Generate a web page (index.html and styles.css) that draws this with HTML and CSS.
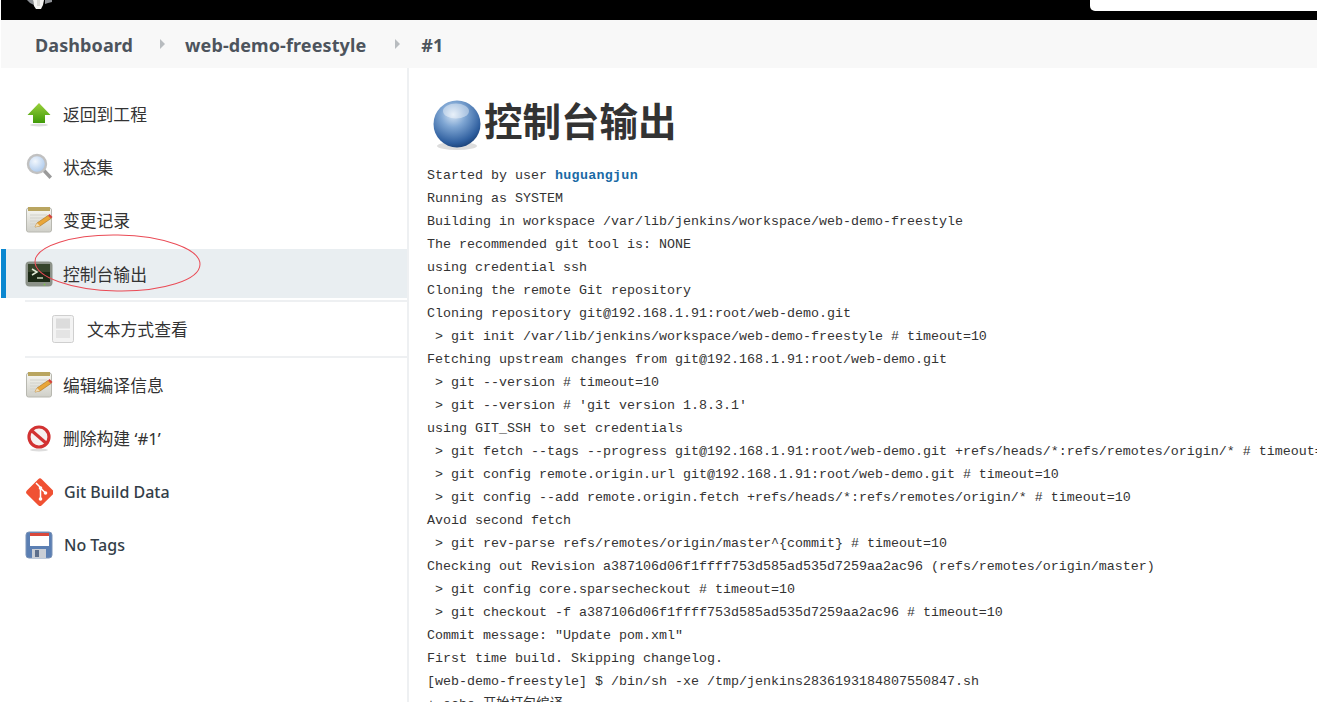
FILE: index.html
```html
<!DOCTYPE html>
<html lang="zh">
<head>
<meta charset="utf-8">
<title>控制台输出</title>
<link rel="stylesheet" href="styles.css">
</head>
<body>
<svg class="defs" width="0" height="0" aria-hidden="true">
  <defs>
    <linearGradient id="notePaper" x1="0" y1="0" x2="0" y2="1"><stop offset="0" stop-color="#f7f7f2"/><stop offset="1" stop-color="#cfcfc8"/></linearGradient>
    <radialGradient id="globe" cx="0.42" cy="0.3" r="0.75"><stop offset="0" stop-color="#d9e7f6"/><stop offset="0.35" stop-color="#7fa6d3"/><stop offset="0.8" stop-color="#2f5f9f"/><stop offset="1" stop-color="#173c70"/></radialGradient>
    <radialGradient id="lens" cx="0.4" cy="0.35" r="0.7"><stop offset="0" stop-color="#f2f7fd"/><stop offset="1" stop-color="#a6c5ea"/></radialGradient>
    <linearGradient id="arrow" x1="0" y1="0" x2="0" y2="1"><stop offset="0" stop-color="#9ad13c"/><stop offset="1" stop-color="#3f9a08"/></linearGradient>
    <symbol id="note" viewBox="0 0 28 28">
      <rect x="1.5" y="2" width="25" height="24" rx="2" fill="url(#notePaper)" stroke="#b8b8b0"/>
      <rect x="3" y="1" width="22" height="4" fill="#b9a560"/>
      <path d="M5 9h17M5 12h14M5 15h9M5 18h7M5 21h6" stroke="#d2d2cc" stroke-width="1.2"/>
      <path d="M10 21l2-4L23 9.500l3 3L15 20z" fill="#e9a63a" stroke="#a8701c" stroke-width=".6"/>
      <path d="M23 9.500l3 3 1.500-1.500-3-3z" fill="#d5413a"/>
      <path d="M10 21l2-4 3 3z" fill="#f3dcb2"/>
    </symbol>
  </defs>
</svg>

<header class="topbar">
  <svg class="logo" width="32" height="10" viewBox="0 0 32 10" aria-hidden="true">
    <path d="M2 0h6l1 5-4-2z" fill="#8b8f94"/>
    <path d="M8 0h11l-1 5-2 4H11L9 6z" fill="#f3f3f1"/>
    <path d="M12 0h3v6h-3z" fill="#d8d8d4"/>
    <path d="M20 0h7v2l-4 1-3 1z" fill="#8f9297"/>
  </svg>
  <div class="search"></div>
</header>

<nav class="crumbs">
  <a class="crumb">Dashboard</a><span class="sep"></span>
  <a class="crumb">web-demo-freestyle</a><span class="sep sep-last"></span>
  <a class="crumb">#1</a>
</nav>

<div class="main">
  <aside class="side">
    <a class="task">
      <svg class="ico" viewBox="0 0 28 28"><path d="M14 3L25.500 15H20v8H8v-8H2.500z" fill="url(#arrow)"/><ellipse cx="14" cy="25" rx="9" ry="1.500" fill="#ddd"/></svg>
      <span>返回到工程</span>
    </a>
    <a class="task">
      <svg class="ico" viewBox="0 0 28 28"><path d="M17 18l3-2 7 7.500-2.500 2.500z" fill="#9a9a9a"/><circle cx="12" cy="11" r="9" fill="url(#lens)" stroke="#c1c1c1" stroke-width="2.400"/></svg>
      <span>状态集</span>
    </a>
    <a class="task">
      <svg class="ico" viewBox="0 0 28 28"><use href="#note"/></svg>
      <span>变更记录</span>
    </a>
    <a class="task active">
      <svg class="ico" viewBox="0 0 28 28"><rect x="0.500" y="1.500" width="27" height="25" rx="4" fill="#8c9289"/><rect x="3" y="4" width="22" height="18" fill="#1c2a16"/><rect x="3" y="4" width="22" height="8" fill="#36452c"/><path d="M7 9l5 3-5 3" fill="none" stroke="#dfe8d3" stroke-width="1.500"/><path d="M12 18h6" stroke="#c8d4bb" stroke-width="1.500"/><circle cx="19.500" cy="24.500" r="1" fill="#7fc24c"/></svg>
      <span>控制台输出</span>
    </a>
    <div class="sub">
      <a class="task subtask">
        <svg class="ico" viewBox="0 0 28 28"><rect x="3.500" y="0.500" width="21" height="27" rx="2" fill="#f3f3f3" stroke="#cfcfcf"/><rect x="7" y="3.500" width="14" height="10" fill="#dcdcdc"/><rect x="7" y="15" width="14" height="8" fill="#e4e4e4"/></svg>
        <span>文本方式查看</span>
      </a>
    </div>
    <a class="task">
      <svg class="ico" viewBox="0 0 28 28"><use href="#note"/></svg>
      <span>编辑编译信息</span>
    </a>
    <a class="task">
      <svg class="ico" viewBox="0 0 28 28"><ellipse cx="14" cy="26" rx="9" ry="1.500" fill="#ddd"/><circle cx="14" cy="13" r="10" fill="#f6f1f1" stroke="#d23232" stroke-width="3.200"/><path d="M6.500 6.500l15 13" stroke="#d23232" stroke-width="3.200"/></svg>
      <span>删除构建 ‘#1’</span>
    </a>
    <a class="task">
      <svg class="ico" viewBox="0 0 28 28"><rect x="4.500" y="4.500" width="21" height="21" rx="2.500" transform="rotate(45 15 15) translate(-.500 -.500)" fill="#f05133"/><path d="M11 5l4.500 4.500V21M15.500 10l5 5" fill="none" stroke="#fff" stroke-width="1.500"/><circle cx="15.500" cy="10" r="1.800" fill="#fff"/><circle cx="15.500" cy="21" r="1.800" fill="#fff"/><circle cx="20.500" cy="15" r="1.800" fill="#fff"/></svg>
      <span class="latin">Git Build Data</span>
    </a>
    <a class="task">
      <svg class="ico" viewBox="0 0 28 28"><rect x="1" y="1" width="26" height="26" rx="3" fill="#5b7fb3" stroke="#7b93b7"/><rect x="5" y="2" width="19" height="13" fill="#fff"/><rect x="5" y="2" width="19" height="3" fill="#d9483b"/><rect x="7" y="18" width="14" height="9" fill="#c9ced6"/><rect x="10" y="19" width="4" height="7" fill="#5d6f8c"/></svg>
      <span class="latin">No Tags</span>
    </a>
  </aside>

  <main class="content">
    <h1 class="title">
      <svg class="globe" viewBox="0 0 50 50" aria-hidden="true"><ellipse cx="25" cy="46" rx="20" ry="4" fill="#ddd"/><circle cx="25" cy="24" r="23.500" fill="url(#globe)"/><ellipse cx="24" cy="11" rx="13" ry="7.500" fill="#fff" opacity=".4"/></svg>
      <span>控制台输出</span>
    </h1>
<pre class="console">Started by user <a class="user">huguangjun</a>
Running as SYSTEM
Building in workspace /var/lib/jenkins/workspace/web-demo-freestyle
The recommended git tool is: NONE
using credential ssh
Cloning the remote Git repository
Cloning repository git@192.168.1.91:root/web-demo.git
 &gt; git init /var/lib/jenkins/workspace/web-demo-freestyle # timeout=10
Fetching upstream changes from git@192.168.1.91:root/web-demo.git
 &gt; git --version # timeout=10
 &gt; git --version # 'git version 1.8.3.1'
using GIT_SSH to set credentials
 &gt; git fetch --tags --progress git@192.168.1.91:root/web-demo.git +refs/heads/*:refs/remotes/origin/* # timeout=10
 &gt; git config remote.origin.url git@192.168.1.91:root/web-demo.git # timeout=10
 &gt; git config --add remote.origin.fetch +refs/heads/*:refs/remotes/origin/* # timeout=10
Avoid second fetch
 &gt; git rev-parse refs/remotes/origin/master^{commit} # timeout=10
Checking out Revision a387106d06f1ffff753d585ad535d7259aa2ac96 (refs/remotes/origin/master)
 &gt; git config core.sparsecheckout # timeout=10
 &gt; git checkout -f a387106d06f1ffff753d585ad535d7259aa2ac96 # timeout=10
Commit message: "Update pom.xml"
First time build. Skipping changelog.
[web-demo-freestyle] $ /bin/sh -xe /tmp/jenkins2836193184807550847.sh
+ echo 开始打包编译</pre>
  </main>
</div>

<svg class="annotation" width="170" height="62" viewBox="0 0 170 62" aria-hidden="true"><ellipse cx="83.500" cy="30" rx="82.500" ry="28" fill="none" stroke="#ea4a55" stroke-width="1" transform="rotate(1 84 30)"/></svg>
</body>
</html>
```
FILE: styles.css
```css
* { box-sizing: border-box; }
html, body { height: 100%; }
body {
  margin: 0;
  padding-left: 1px;
  height: 702px;
  overflow: hidden;
  position: relative;
  background: #fff;
  color: #333;
  font-family: "Noto Sans", "Noto Sans CJK SC", sans-serif;
}
.defs { position: absolute; }
.topbar {
  height: 20px;
  background: #000;
  display: flex;
  justify-content: space-between;
  align-items: flex-start;
  padding-left: 24px;
}
.logo { display: block; }
.search {
  width: 227px;
  height: 11px;
  background: #fff;
  border-bottom-left-radius: 5px;
}
.crumbs {
  height: 48px;
  background: #f8f8f8;
  display: flex;
  align-items: center;
  padding: 2px 0 0 34px;
  color: #4d545d;
  font-size: 18px;
  font-weight: 700;
  letter-spacing: .1px;
}
.sep {
  width: 0;
  height: 0;
  margin: -3px 20px 0 27px;
  border-left: 5px solid #b8bcbf;
  border-top: 5px solid transparent;
  border-bottom: 5px solid transparent;
}
.sep-last { margin-left: 29px; margin-right: 21px; }
.main { display: flex; height: 634px; }
.side {
  width: 408px;
  flex: none;
  padding-top: 19px;
  border-right: 2px solid #eef0f2;
}
.task {
  display: flex;
  align-items: center;
  height: 53.400px;
  padding-left: 24px;
  font-size: 16.800px;
  color: #333;
}
.ico { width: 28px; height: 28px; flex: none; margin-right: 10px; }
.latin { font-size: 16px; font-weight: 500; color: #333e48; margin-left: 1px; }
.active {
  height: 49px;
  margin-top: 2px;
  background: #e9eef1;
  border-left: 5px solid #0b87d0;
  padding-left: 19px;
}
.sub {
  margin: 2px 0 0 24px;
  border-top: 2px solid #eef0f2;
  border-bottom: 2px solid #eef0f2;
  height: 58px;
}
.subtask { height: 54px; padding-left: 24px; }
.content { flex: 1; min-width: 0; padding: 0 0 0 18px; overflow: hidden; }
.title {
  margin: 23px 0 0 5px;
  height: 56px;
  display: flex;
  align-items: center;
  font-size: 38.500px;
  font-weight: 700;
  line-height: 46px;
  color: #333;
  font-family: "Noto Sans CJK SC", sans-serif;
}
.globe { width: 50px; height: 50px; margin: 12px 2px 0 0; flex: none; }
.console {
  margin: 17px 0 0;
  font-family: "Liberation Mono", "Noto Sans CJK SC", monospace;
  font-size: 13.330px;
  line-height: 23px;
  color: #333;
  white-space: pre;
}
.user { font-weight: 700; color: #1a6aa5; letter-spacing: .3px; }
.annotation { position: absolute; left: 34px; top: 233px; }
```
